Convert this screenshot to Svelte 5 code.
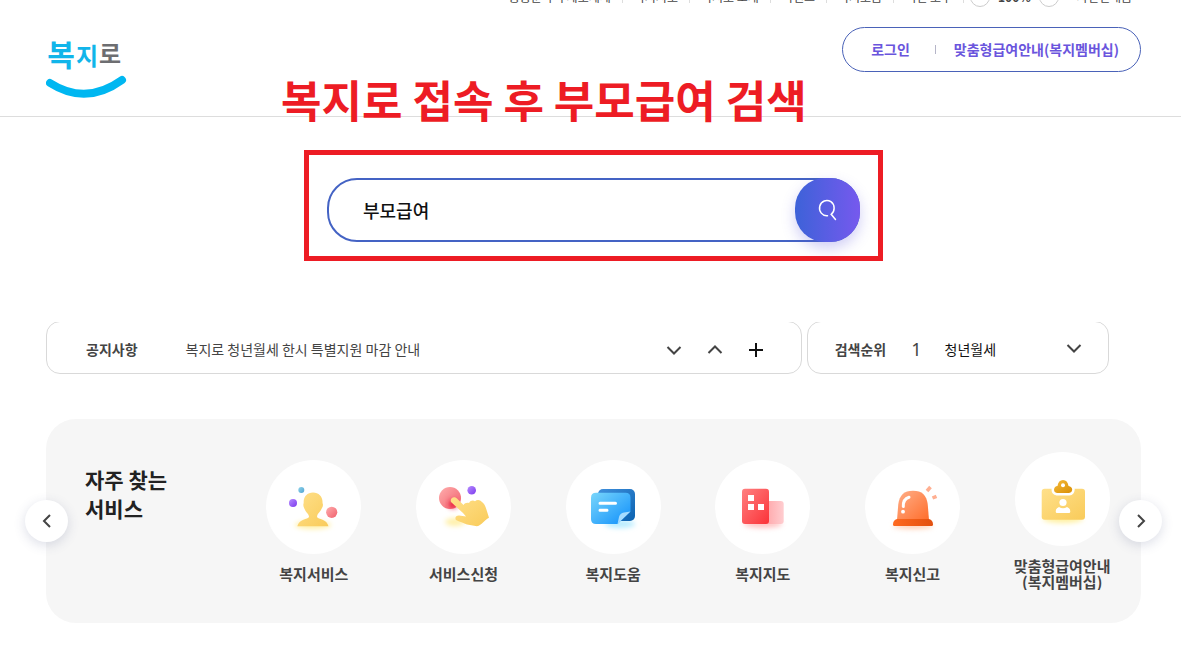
<script lang="ts">
	type Service = { icon: string; lines: string[] };

	const utilities = ['공공분야의 제도체계', '복지지도', '복지로 소개', '이벤트', '복지도움', '이민 도구'];

	const services: Service[] = [
		{ icon: 'person', lines: ['복지서비스'] },
		{ icon: 'touch', lines: ['서비스신청'] },
		{ icon: 'note', lines: ['복지도움'] },
		{ icon: 'building', lines: ['복지지도'] },
		{ icon: 'siren', lines: ['복지신고'] },
		{ icon: 'badge', lines: ['맞춤형급여안내', '(복지멤버십)'] }
	];

	let keyword = $state('부모급여');
</script>

<div class="topbar">
	<ul class="utilities">
		{#each utilities as item}
			<li><a href="/">{item}</a></li>
		{/each}
	</ul>
	<div class="zoom-level">
		<button type="button" aria-label="축소"></button>
		<strong>100%</strong>
		<button type="button" aria-label="확대"></button>
	</div>
	<a href="/">사진인내품</a>
</div>

<header>
	<a class="logo" href="/" aria-label="복지로">
		<svg width="82" height="74" viewBox="0 0 82 74">
			<g font-family="'Noto Sans CJK KR', sans-serif" font-weight="700" text-anchor="middle">
				<text x="15" y="39" font-size="30" fill="#11b5ea">복</text>
				<text x="41" y="38" font-size="24" fill="#11b5ea">지</text>
				<text x="64" y="36" font-size="24" fill="#6d6e71">로</text>
			</g>
			<path d="M4 56Q40 79 76 53" fill="none" stroke="#00b7f1" stroke-width="8" stroke-linecap="round" />
		</svg>
	</a>
	<h1 class="caption">복지로 접속 후 부모급여 검색</h1>
	<nav class="account">
		<a href="/">로그인</a>
		<span class="bar"></span>
		<a href="/">맞춤형급여안내(복지멤버십)</a>
	</nav>
</header>

<main>
	<div class="highlight">
		<form class="search" onsubmit={(e) => e.preventDefault()}>
			<input type="text" aria-label="검색어" bind:value={keyword} />
			<button type="submit" aria-label="검색">
				<svg width="24" height="24" viewBox="0 0 24 24" fill="none" stroke="#fff" stroke-width="1.5" stroke-linecap="round">
					<path d="M11.500 17.800A7.300 7.700 0 1 1 15.200 16.300L19.500 21.500" />
				</svg>
			</button>
		</form>
	</div>

	<div class="boards">
		<section class="board notice">
			<h2>공지사항</h2>
			<a href="/">복지로 청년월세 한시 특별지원 마감 안내</a>
			<div class="controls">
				<button type="button" aria-label="다음">
					<svg width="16" height="16" viewBox="0 0 16 16"><path d="M1.500 6L8 12.500L14.500 6" /></svg>
				</button>
				<button type="button" aria-label="이전">
					<svg width="16" height="16" viewBox="0 0 16 16"><path d="M1.500 12L8 5.500L14.500 12" /></svg>
				</button>
				<button type="button" class="more" aria-label="더보기">
					<svg width="16" height="16" viewBox="0 0 16 16"><path d="M1 9H15M8 2V16" /></svg>
				</button>
			</div>
		</section>
		<section class="board rank">
			<h2>검색순위</h2>
			<span class="number">1</span>
			<a href="/">청년월세</a>
			<div class="controls">
				<button type="button" aria-label="펼치기">
					<svg width="16" height="16" viewBox="0 0 16 16"><path d="M1.500 4L8 10.500L14.500 4" /></svg>
				</button>
			</div>
		</section>
	</div>

	<section class="services">
		<h2>자주 찾는<br />서비스</h2>
		<div class="viewport">
			<ul class="track">
				{#each services as service}
					<li>
						<a href="/">
							<span class="disc">
								<svg width="95" height="94" viewBox="0 0 95 94">
									{#if service.icon === 'person'}
										<ellipse cx="47" cy="65" rx="18" ry="4" fill="#fff0a8" filter="url(#soft)" />
										<path d="M47 32.500C53 32.500 57 37 56.500 43C58 46 55.500 48 55 50C53 53 51 54 51 57C52 59.500 61 59 62.500 66.300H31.300C33 59 42 59.500 43 57C43 54 40.500 53 39 50C38.500 48 36.500 46 37.700 43C37.200 37 41 32.500 47 32.500Z" fill="url(#gold)" />
										<circle cx="35.300" cy="30" r="3" fill="url(#sky)" />
										<circle cx="27" cy="43" r="4" fill="url(#violet)" />
										<circle cx="65.700" cy="52.300" r="5.600" fill="url(#rose)" />
									{:else if service.icon === 'touch'}
										<ellipse cx="39" cy="62" rx="10" ry="4" fill="#fff0a8" filter="url(#soft)" />
										<circle cx="34" cy="38" r="11" fill="url(#rose)" />
										<circle cx="37" cy="44" r="4" fill="#e91e3a" filter="url(#soft)" />
										<circle cx="55.700" cy="30.300" r="4.300" fill="url(#violet)" />
										<path d="M35 42C33.500 38 38 35.500 41 38.500L47.500 45C48.500 43 51 42.500 53 43C54.500 40.500 57 40 59 41.200C61 39.300 64 39.500 66 42C69 44 70 48 73 57.700C68 60 66 65 61 66.300L51 64.500C48 63 43 61.500 40 60C38.500 57.500 40 55.500 43 55.500L50 56.500L47 53Z" fill="url(#gold)" />
									{:else if service.icon === 'note'}
										<ellipse cx="54" cy="64" rx="15" ry="4" fill="#b7ecff" filter="url(#soft)" />
										<rect x="32" y="29" width="37" height="32" rx="5" fill="url(#navy)" />
										<path d="M30 32.700H59.500Q64.500 32.700 64.500 37.700V51.500L51.500 64H30Q25 64 25 59V37.700Q25 32.700 30 32.700Z" fill="url(#azure)" />
										<path d="M51.500 64L53 57Q54 53 58 52.500L64.500 51.500Z" fill="#a5dcff" />
										<path d="M34 43.200H49.500M34 50.300H41" stroke="#fff" stroke-width="3" stroke-linecap="round" />
									{:else if service.icon === 'building'}
										<ellipse cx="48" cy="64" rx="19" ry="4" fill="#ffc3c3" filter="url(#soft)" />
										<rect x="50" y="41" width="18.700" height="23" rx="3" fill="url(#blush)" />
										<rect x="27" y="28.700" width="27" height="35.300" rx="3" fill="url(#red)" />
										<path d="M33 35h6v6h-6zM33 44h6v6h-6zM43 44h6v6h-6z" fill="#fff" />
									{:else if service.icon === 'siren'}
										<ellipse cx="48" cy="66" rx="20" ry="3" fill="#ffd0b5" filter="url(#soft)" />
										<path d="M32 60L33.300 44C34.500 35 39 30.700 48 30.700S61.500 35 62.700 44L64 60Z" fill="url(#orange)" />
										<path d="M32 59H64Q68 60 68 64.500Q68 66 66.500 66H29.500Q28 66 28 64.500Q28 60 32 59Z" fill="url(#ember)" />
										<path d="M44 37.200Q38 39 38.300 46.500" fill="none" stroke="#fff" stroke-width="3" stroke-linecap="round" />
										<circle cx="38" cy="51.700" r="1.900" fill="#fff" />
										<path d="M62 31L65.500 27M67.500 38L71.500 36.300" stroke="#ffaf91" stroke-width="3.500" />
									{:else}
										<ellipse cx="48" cy="67" rx="20" ry="4" fill="#fff0a0" filter="url(#soft)" />
										<rect x="26.700" y="36.700" width="43.300" height="31" rx="3" fill="url(#gold)" />
										<path d="M42 41Q39 40.500 39 37.500Q39.500 34 42.500 34C43 30 45 28 48 28S53 30 53.500 34Q57 34.500 57.200 37.500Q57 40.500 54 41Z" fill="url(#amber)" stroke="#fff" stroke-width="5" stroke-linejoin="round" paint-order="stroke" />
										<circle cx="48" cy="33.300" r="2" fill="#fff" />
										<circle cx="48" cy="50.500" r="3.600" fill="#fff" />
										<path d="M44 55Q48 57.500 52 55Q55.300 56 55.300 59.500Q55.300 61 54 61H42Q40.700 61 40.700 59.500Q40.700 56 44 55Z" fill="#fff" />
									{/if}
								</svg>
							</span>
							<span class="label">
								{#each service.lines as line}
									<span>{line}</span>
								{/each}
							</span>
						</a>
					</li>
				{/each}
			</ul>
		</div>
		<button type="button" class="slide prev" aria-label="이전 서비스">
			<svg width="16" height="16" viewBox="0 0 16 16"><path d="M11 2L5 8L11 14" /></svg>
		</button>
		<button type="button" class="slide next" aria-label="다음 서비스">
			<svg width="16" height="16" viewBox="0 0 16 16"><path d="M5 2L11 8L5 14" /></svg>
		</button>
	</section>
</main>

<!-- shared gradients for the service icons -->
<svg class="defs" width="0" height="0" aria-hidden="true">
	<defs>
		<filter id="soft" x="-50%" y="-100%" width="200%" height="300%"><feGaussianBlur stdDeviation="2.500" /></filter>
		<linearGradient id="gold" x2="1" y2="1"><stop stop-color="#ffe08a" /><stop offset="1" stop-color="#f9cb5a" /></linearGradient>
		<linearGradient id="sky" x2="1" y2="1"><stop stop-color="#8fd3ea" /><stop offset="1" stop-color="#4fa3d1" /></linearGradient>
		<linearGradient id="violet" x2="1" y2="1"><stop stop-color="#b68cff" /><stop offset="1" stop-color="#7c3aed" /></linearGradient>
		<linearGradient id="rose" x2="1" y2="1"><stop stop-color="#ffaeae" /><stop offset="1" stop-color="#f0606c" /></linearGradient>
		<linearGradient id="navy" x2="1" y2="1"><stop stop-color="#3f8fdc" /><stop offset="1" stop-color="#0b62b0" /></linearGradient>
		<linearGradient id="azure" x2="1" y2="1"><stop stop-color="#79d6fb" /><stop offset="1" stop-color="#0f8ffb" /></linearGradient>
		<linearGradient id="red" x2="1" y2="1"><stop stop-color="#ff8080" /><stop offset="1" stop-color="#fb3238" /></linearGradient>
		<linearGradient id="blush" x2="1" y2="0"><stop stop-color="#ffa5a8" /><stop offset="1" stop-color="#ffcdd0" /></linearGradient>
		<linearGradient id="orange" x2="1" y2="1"><stop stop-color="#ffb08a" /><stop offset="1" stop-color="#ff6d2b" /></linearGradient>
		<linearGradient id="ember" x2="1"><stop stop-color="#ff6a20" /><stop offset="1" stop-color="#e2500f" /></linearGradient>
		<linearGradient id="amber" x2="1" y2="1"><stop stop-color="#f5bb3a" /><stop offset="1" stop-color="#d98f05" /></linearGradient>
	</defs>
</svg>

<style>
	:global(body) {
		background: #fff;
		color: #444;
		font-family: 'Noto Sans CJK KR', sans-serif;
		font-size: 14px;
	}

	a {
		color: inherit;
		text-decoration: none;
	}

	ul {
		list-style: none;
		margin: 0;
		padding: 0;
	}

	h1,
	h2 {
		margin: 0;
	}

	button {
		display: flex;
		align-items: center;
		justify-content: center;
		padding: 0;
		border: 0;
		background: none;
		cursor: pointer;
	}

	.topbar {
		display: flex;
		align-items: flex-end;
		justify-content: flex-end;
		gap: 18px;
		height: 7px;
		padding-right: 49px;
		overflow: hidden;
		font-size: 12px;
		line-height: 20px;
		white-space: nowrap;
	}

	.utilities,
	.zoom-level {
		display: flex;
		align-items: center;
	}

	.utilities {
		margin-right: -12px;
	}

	.utilities li {
		display: flex;
		align-items: center;
	}

	.utilities li::after {
		content: '';
		width: 1px;
		height: 12px;
		margin: 0 11px;
		background: #ddd;
	}

	.utilities li:last-child::after {
		margin-right: 0;
	}

	.zoom-level {
		gap: 8px;
	}

	.zoom-level button {
		box-sizing: border-box;
		width: 20px;
		height: 20px;
		border: 1px solid #ccc;
		border-radius: 50%;
	}

	header {
		position: relative;
		display: flex;
		align-items: flex-start;
		justify-content: space-between;
		padding: 20px 40px 15px 46px;
		border-bottom: 1px solid #ddd;
	}

	.logo svg {
		display: block;
	}

	.caption {
		position: absolute;
		top: 66px;
		left: 281px;
		color: #ed1c24;
		font-size: 44px;
		font-weight: 700;
		line-height: 52px;
		white-space: nowrap;
	}

	.account {
		display: flex;
		align-items: center;
		height: 43px;
		padding: 0 21px 0 28px;
		border: 1px solid #4a62b8;
		border-radius: 23px;
		color: #6a55dd;
		font-weight: 700;
	}

	.account a {
		margin-top: -2px;
	}

	.bar {
		width: 1px;
		height: 9px;
		margin: 0 18px 0 25px;
		background: #b5b5c8;
	}

	main {
		padding: 33px 40px 22px 46px;
	}

	.highlight {
		box-sizing: border-box;
		max-width: 579px;
		margin: 0 auto;
		padding: 23px 18px 14px;
		border: 5px solid #ed1c24;
	}

	.search {
		display: flex;
		box-sizing: border-box;
		height: 64px;
		border: 2px solid #4463c4;
		border-radius: 30px;
	}

	.search input {
		flex: 1;
		min-width: 0;
		padding: 0 0 0 34px;
		border: 0;
		outline: 0;
		background: none;
		color: #111;
		font: 500 18px 'Noto Sans CJK KR', sans-serif;
	}

	.search button {
		width: 65px;
		margin: -2px;
		border-radius: 30px;
		background: linear-gradient(90deg, #3d62d8, #7659ee);
		box-shadow: 0 6px 14px rgba(85, 80, 220, 0.28);
	}

	.boards {
		display: grid;
		grid-template-columns: 5fr 2fr;
		gap: 5px;
		margin: 61px 32px 0 0;
		overflow: hidden;
	}

	.board {
		display: flex;
		align-items: center;
		box-sizing: border-box;
		height: 53px;
		margin-top: -1px;
		padding-top: 3px;
		border: 1px solid #d9d9d9;
		border-radius: 14px;
		white-space: nowrap;
	}

	.board h2 {
		font-size: 14px;
		font-weight: 700;
	}

	.notice {
		padding-right: 24px;
		padding-left: 39px;
	}

	.notice > a {
		margin-left: 48px;
	}

	.rank {
		padding-right: 13px;
		padding-left: 27px;
	}

	.rank > a {
		color: #111;
	}

	.number {
		margin: 0 23px 0 25px;
		font-family: 'Noto Sans', sans-serif;
		font-size: 18px;
		line-height: 20px;
	}

	.controls {
		display: flex;
		margin-left: auto;
	}

	.controls button {
		width: 41px;
		height: 41px;
	}

	.controls path,
	.slide path {
		fill: none;
		stroke: #444;
		stroke-width: 2;
	}

	.more path {
		stroke: #111;
	}

	.services {
		position: relative;
		display: flex;
		align-items: center;
		height: 204px;
		margin-top: 45px;
		padding: 0 31px 0 39px;
		border-radius: 30px;
		background: #f6f6f6;
	}

	.services h2 {
		align-self: flex-start;
		flex: 0 0 154px;
		padding-top: 46px;
		color: #222;
		font-size: 21px;
		font-weight: 700;
		line-height: 29px;
	}

	.viewport {
		flex: 1;
		min-width: 0;
		overflow: hidden;
	}

	.track {
		display: grid;
		grid-template-columns: repeat(6, 1fr);
		align-items: center;
		margin-right: -27px;
	}

	.track a {
		display: flex;
		flex-direction: column;
		align-items: center;
		gap: 12px;
	}

	.disc {
		border-radius: 50%;
		background: #fff;
	}

	.disc svg {
		display: block;
	}

	.label {
		display: flex;
		flex-direction: column;
		align-items: center;
		font-size: 15px;
		font-weight: 700;
		line-height: 16px;
		white-space: nowrap;
	}

	.slide {
		position: absolute;
		top: 81px;
		width: 43px;
		height: 42px;
		border-radius: 50%;
		background: #fff;
		box-shadow: 0 3px 12px rgba(60, 70, 120, 0.18);
	}

	.prev {
		left: -21px;
	}

	.next {
		right: -21px;
	}

	.defs {
		position: absolute;
	}
</style>
